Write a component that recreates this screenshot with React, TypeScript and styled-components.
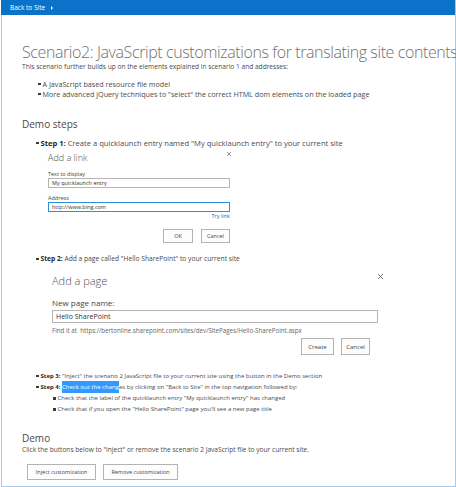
import React from "react";
import styled, { createGlobalStyle } from "styled-components";

const Global = createGlobalStyle`
  html, body { margin: 0; padding: 0; background: #ffffff; }
  body { font-family: "Open Sans", "Noto Sans", "Liberation Sans", sans-serif; color: #444444; }
  * { box-sizing: border-box; }
`;

const Frame = styled.div`
  width: 455px;
  margin-left: 1px;
  border-left: 1px solid #a9c7e7;
  border-right: 1px solid #a9c7e7;
  border-bottom: 2px solid #a9c7e7;
`;

const TopBar = styled.div`
  height: 15px;
  background: #0a72c9;
  display: flex;
  align-items: center;
  padding-left: 9px;
  gap: 6px;
  margin-left: -1px;
`;

const BackLink = styled.span`
  color: #ffffff;
  font-size: 6.5px;
  line-height: 15px;
`;

const Caret = styled.span`
  width: 0;
  height: 0;
  border-top: 2px solid transparent;
  border-bottom: 2px solid transparent;
  border-left: 2.5px solid #ffffff;
`;

const Content = styled.div`
  padding: 28px 0 6px 20px;
  display: flex;
  flex-direction: column;
`;

const Title = styled.h1`
  margin: 0;
  font-weight: 300;
  font-size: 16px;
  line-height: 19px;
  color: #707070;
  white-space: nowrap;
  letter-spacing: -0.4px;
`;

const Text = styled.p<{ $size: number }>`
  margin: 0;
  font-size: ${(p) => p.$size}px;
  line-height: 10px;
  color: #4a4a4a;
  white-space: nowrap;
`;

const List = styled.ul<{ $indent: number; $line: number; $top: number }>`
  list-style: none;
  margin: ${(p) => p.$top}px 0 0 0;
  padding: 0 0 0 ${(p) => p.$indent}px;
  display: flex;
  flex-direction: column;
  line-height: ${(p) => p.$line}px;
  color: #4a4a4a;
`;

const Item = styled.li`
  display: flex;
  flex-direction: column;
`;

const ItemLine = styled.div<{ $size: number }>`
  display: flex;
  align-items: center;
  white-space: nowrap;
  font-size: ${(p) => p.$size}px;
  &::before {
    content: "";
    width: 2.5px;
    height: 2.5px;
    background: #3a3a3a;
    margin-right: 2px;
    flex: none;
  }
`;

const Heading = styled.h2<{ $top: number }>`
  margin: ${(p) => p.$top}px 0 0 0;
  font-weight: 400;
  font-size: 10px;
  line-height: 14px;
  color: #4a4a4a;
`;

const StepLabel = styled.b`
  font-weight: 700;
  color: #262626;
  margin-right: 0.25em;
`;

const Selected = styled.span`
  background: #3399ff;
  color: #ffffff;
  padding: 1px 0;
`;

const Dialog = styled.div<{ $left: number; $width: number; $top: number; $bottom: number }>`
  margin: ${(p) => p.$top}px 0 ${(p) => p.$bottom}px ${(p) => p.$left}px;
  width: ${(p) => p.$width}px;
  display: flex;
  flex-direction: column;
`;

const DialogHeader = styled.div`
  display: flex;
  justify-content: space-between;
  align-items: flex-start;
`;

const DialogTitle = styled.div<{ $size: number; $line: number }>`
  font-size: ${(p) => p.$size}px;
  line-height: ${(p) => p.$line}px;
  font-weight: 300;
  color: #505050;
`;

const Close = styled.svg<{ $right: number; $top: number }>`
  flex: none;
  margin-right: ${(p) => p.$right}px;
  margin-top: ${(p) => p.$top}px;
`;

const FieldLabel = styled.div<{ $size: number; $line: number; $top: number }>`
  margin-top: ${(p) => p.$top}px;
  font-size: ${(p) => p.$size}px;
  line-height: ${(p) => p.$line}px;
  color: #444444;
  white-space: nowrap;
`;

const Input = styled.div<{ $height: number; $size: number; $top: number; $focus?: boolean }>`
  margin-top: ${(p) => p.$top}px;
  height: ${(p) => p.$height}px;
  border: 1px solid ${(p) => (p.$focus ? "#2d8fd9" : "#b5b5b5")};
  font-size: ${(p) => p.$size}px;
  line-height: ${(p) => p.$height - 2}px;
  padding-left: 3px;
  color: #333333;
  white-space: nowrap;
`;

const TryLink = styled.div`
  margin-top: 1px;
  align-self: flex-end;
  font-size: 5.5px;
  line-height: 7px;
  color: #0072c6;
`;

const Hint = styled.div`
  margin-top: 4px;
  font-size: 6.2px;
  line-height: 7px;
  color: #666666;
  white-space: nowrap;
`;

const ButtonRow = styled.div<{ $top: number; $gap: number; $right: number }>`
  margin-top: ${(p) => p.$top}px;
  padding-right: ${(p) => p.$right}px;
  display: flex;
  justify-content: flex-end;
  gap: ${(p) => p.$gap}px;
`;

const Button = styled.button<{ $w: number; $h: number; $size: number }>`
  width: ${(p) => p.$w}px;
  height: ${(p) => p.$h}px;
  padding: 0;
  border: 1px solid #b3b3b3;
  background: #fdfdfd;
  font-family: inherit;
  font-size: ${(p) => p.$size}px;
  color: #444444;
`;

const DemoButtons = styled.div`
  margin-top: 9px;
  margin-left: 5px;
  display: flex;
  gap: 7px;
`;

const CloseIcon = ({ size, right, top }: { size: number; right: number; top: number }) => (
  <Close $right={right} $top={top} width={size} height={size} viewBox="0 0 10 10">
    <path d="M1.5 1.5 L8.5 8.5 M8.5 1.5 L1.5 8.5" stroke="#555" strokeWidth="1.1" fill="none" />
  </Close>
);

export default function App() {
  return (
    <>
      <Global />
      <Frame>
        <TopBar>
          <BackLink>Back to Site</BackLink>
          <Caret />
        </TopBar>
        <Content>
          <Title>Scenario2: JavaScript customizations for translating site contents</Title>
          <Text $size={6.6}>This scenario further builds up on the elements explained in scenario 1 and addresses:</Text>
          <List $indent={16} $line={10} $top={7}>
            <Item><ItemLine $size={7.2}>A JavaScript based resource file model</ItemLine></Item>
            <Item><ItemLine $size={7.2}>More advanced jQuery techniques to "select" the correct HTML dom elements on the loaded page</ItemLine></Item>
          </List>
          <Heading $top={18}>Demo steps</Heading>
          <List $indent={14} $line={10} $top={7}>
            <Item>
              <ItemLine $size={7.6}><StepLabel>Step 1:</StepLabel>Create a quicklaunch entry named "My quicklaunch entry" to your current site</ItemLine>
              <Dialog $left={12} $width={182} $top={4} $bottom={11}>
                <DialogHeader>
                  <DialogTitle $size={9} $line={12}>Add a link</DialogTitle>
                  <CloseIcon size={6} right={-2} top={-1} />
                </DialogHeader>
                <FieldLabel $size={5.5} $line={7} $top={7}>Text to display</FieldLabel>
                <Input $height={10} $size={5.5} $top={0}>My quicklaunch entry</Input>
                <FieldLabel $size={5.5} $line={7} $top={7}>Address</FieldLabel>
                <Input $height={10} $size={5.5} $top={0} $focus>http://www.bing.com</Input>
                <TryLink>Try link</TryLink>
                <ButtonRow $top={9} $gap={8} $right={0}>
                  <Button $w={30} $h={14} $size={5.5}>OK</Button>
                  <Button $w={29} $h={14} $size={5.5}>Cancel</Button>
                </ButtonRow>
              </Dialog>
            </Item>
            <Item>
              <ItemLine $size={6.7}><StepLabel>Step 2:</StepLabel>Add a page called "Hello SharePoint" to your current site</ItemLine>
              <Dialog $left={16} $width={326} $top={9} $bottom={16}>
                <DialogHeader>
                  <DialogTitle $size={11} $line={16}>Add a page</DialogTitle>
                  <CloseIcon size={7} right={-6} top={0} />
                </DialogHeader>
                <FieldLabel $size={8} $line={10} $top={9}>New page name:</FieldLabel>
                <Input $height={13} $size={7} $top={2}>Hello SharePoint</Input>
                <Hint>Find it at &nbsp;https://bertonline.sharepoint.com/sites/dev/SitePages/Hello-SharePoint.aspx</Hint>
                <ButtonRow $top={4} $gap={7} $right={8}>
                  <Button $w={33} $h={17} $size={6}>Create</Button>
                  <Button $w={29} $h={17} $size={6}>Cancel</Button>
                </ButtonRow>
              </Dialog>
            </Item>
            <Item>
              <ItemLine $size={6}><StepLabel>Step 3:</StepLabel>"Inject" the scenario 2 JavaScript file to your current site using the button in the Demo section</ItemLine>
            </Item>
            <Item>
              <ItemLine $size={6}><StepLabel>Step 4:</StepLabel><Selected>Check out the chang</Selected>es by clicking on "Back to Site" in the top navigation followed by:</ItemLine>
              <List $indent={17} $line={11} $top={0}>
                <Item><ItemLine $size={6}>Check that the label of the quicklaunch entry "My quicklaunch entry" has changed</ItemLine></Item>
                <Item><ItemLine $size={6}>Check that if you open the "Hello SharePoint" page you'll see a new page title</ItemLine></Item>
              </List>
            </Item>
          </List>
          <Heading $top={16}>Demo</Heading>
          <Text $size={6.6}>Click the buttons below to "inject" or remove the scenario 2 JavaScript file to your current site.</Text>
          <DemoButtons>
            <Button $w={69} $h={16} $size={5.5}>Inject customization</Button>
            <Button $w={75} $h={16} $size={5.5}>Remove customization</Button>
          </DemoButtons>
        </Content>
      </Frame>
    </>
  );
}
